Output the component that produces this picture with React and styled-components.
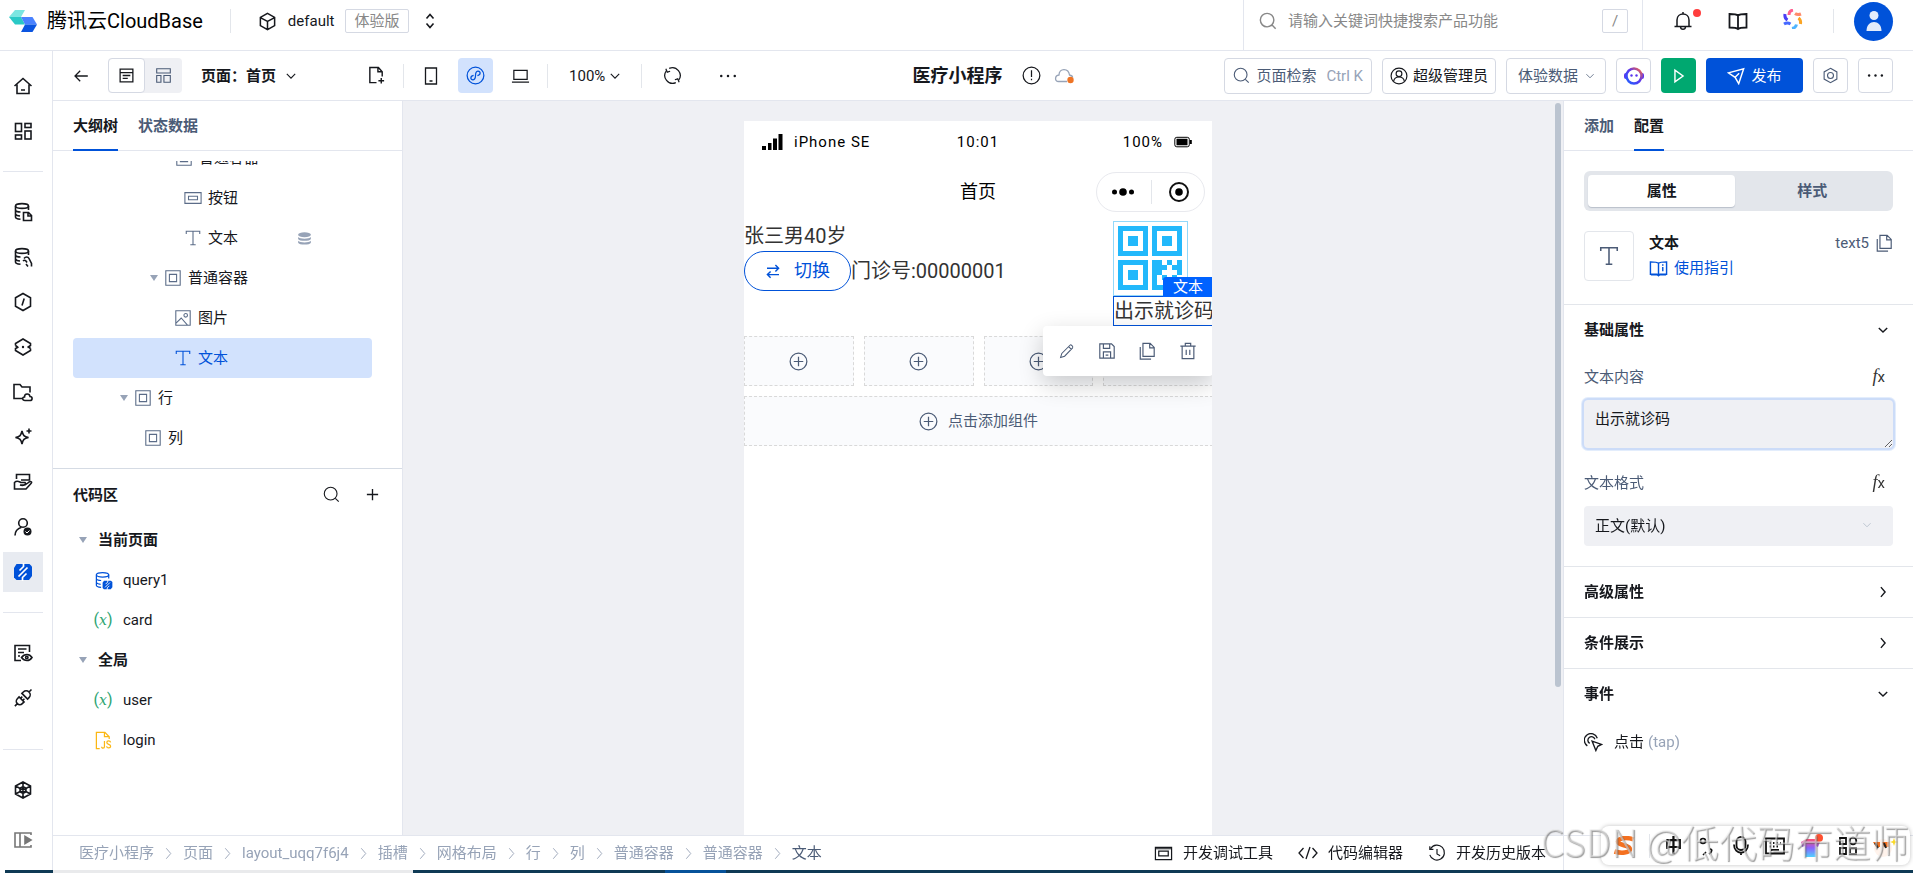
import { useState } from "react";
import styled, { createGlobalStyle, css } from "styled-components";

const GlobalStyle = createGlobalStyle`
  * {
    box-sizing: border-box;
  }
  body {
    margin: 0;
    color: #16181d;
    font-family: Roboto, "Noto Sans CJK SC", sans-serif;
    font-size: 15px;
    line-height: 20px;
  }
  button, input, select, textarea {
    font: inherit;
    color: inherit;
  }
  button {
    padding: 0;
    border: 0;
    background: none;
    cursor: pointer;
  }
  a {
    color: inherit;
    text-decoration: none;
  }
  ul, ol {
    list-style: none;
    margin: 0;
    padding: 0;
  }
`;

/* ---------- icons ---------- */

const Svg = styled.svg`
  display: block;
  flex: none;
  width: ${(p) => p.$size || 20}px;
  height: ${(p) => p.$size || 20}px;
  fill: none;
  stroke: currentColor;
  stroke-width: ${(p) => p.$weight || 1.3};
  color: ${(p) => p.$color || "inherit"};
`;

const DB = (
  <>
    <ellipse cx="9" cy="4" rx="6.5" ry="2.4" />
    <path d="M2.5 4v11c0 1 2 2 5 2.3M15.5 4v4M2.5 8c.3 1 2.5 2 5 2M2.5 12c.3 1 2 1.8 4.5 2" />
  </>
);
const BOLT = (
  <>
    <path d="M3.500 2h13L19 4.500V14l-3 4H3.500L1 15.500V6z" fill="currentColor" stroke="none" />
    <path d="M10.500 1v3.500L6.500 8.500M9.500 19v-3.500l4-4M14.500 5.500l-9 9" stroke="#fff" strokeWidth="1.700" />
  </>
);

const glyphs = {
  home: <path d="M1.5 10 10 2.5 18.5 10M4 8.5v9h12v-9M8 14h4" />,
  apps: (
    <>
      <rect x="2.5" y="2.5" width="6" height="8" />
      <rect x="12" y="2.5" width="6" height="4" />
      <rect x="2.5" y="14" width="6" height="4" />
      <rect x="12" y="10" width="6" height="8" />
    </>
  ),
  dbFile: (
    <>
      {DB}
      <path d="M10.5 10.5h5l3 3v5h-8zM15 10.5v3.5h3.5" />
    </>
  ),
  dbHand: (
    <>
      {DB}
      <path d="M10 14c1-1 2-1 3 0l1 1.5M11 11.5c1.5-2 4-2 5 0l2.500 5v3M13 17l2 2.500" />
    </>
  ),
  hexSlash: <path d="m10 1.500 7.500 4.300v8.400L10 18.500l-7.500-4.300V5.800zM11.200 6.500 9 13.500" />,
  hexDots: (
    <>
      <path d="M2.500 8.500V6.500L10 2l7.500 4.500v2l-3 2M2.500 8.500l2 1.500M17.500 11.500v2L10 18l-7.500-4.500v-2l3-1.500M17.500 11.500l-2-1.500" />
      <circle cx="10" cy="10" r="1.200" fill="currentColor" stroke="none" />
    </>
  ),
  folderCloud: (
    <>
      <path d="M9 16.500H1V2.500h6l2 2.500h8v5.500" />
      <path d="M12 18.500c-3 0-3-3.500-.5-3.500 0-4 5-4 5.500-.5 3 .2 2.500 4 0 4z" />
    </>
  ),
  sparkle: <path d="M9 4c1 4.500 2 5.500 6.500 6.500C11 11.500 10 12.500 9 17c-1-4.500-2-5.500-6.500-6.500C7 9.500 8 8.500 9 4zM16 1.500v5M13.500 4h5" />,
  handCard: (
    <>
      <path d="M3.500 7V2.500h13V8H8" />
      <path d="M1.500 10.500c3-3 5.500 0 6.500 0h4c1.500 2-.5 3-5 2.500 5 1.500 6.500-1 9-3 2-1 3.500 0 2 1.500L13 17H1.500z" />
    </>
  ),
  userCheck: (
    <>
      <circle cx="10" cy="6" r="4.300" />
      <path d="M2 18.500c0-4 2.500-7 6.500-8.300" />
      <circle cx="14.500" cy="14.500" r="4" fill="currentColor" stroke="none" />
      <path d="m12.500 14.500 1.500 1.500 2.500-2.500" stroke="#fff" strokeWidth="1" />
    </>
  ),
  bolt: BOLT,
  docEye: (
    <>
      <path d="M8 17.500H2v-15h14.500V9M5 6h8.500M5 9.500h6M5 13h2" />
      <path d="M8.500 14.500c3-4 8-4 10.500 0-2.500 4-7.500 4-10.500 0z" />
      <circle cx="13.800" cy="14.500" r="1.200" />
    </>
  ),
  plug: (
    <g transform="rotate(-45 10 10)">
      <path d="M-1.500 10H2M8 6.500H5.500a3.500 3.500 0 0 0 0 7H8zM8 8.500h2.500M8 11.500h2.500" />
      <path d="M12.500 6h2a4 4 0 0 1 0 8h-2zM18.500 10H22" />
    </g>
  ),
  hexNet: (
    <>
      <path d="m10 2 7.500 4v8L10 18l-7.500-4V6zM10 2v16M2.500 6l15 8M17.500 6l-15 8" />
      <circle cx="10" cy="10" r="3" />
    </>
  ),
  expand: (
    <>
      <path d="M18 5V3H2v14h16v-2M7 3v14" />
      <path d="M12 6.500v7l6-3.500z" fill="currentColor" />
    </>
  ),
  cube: <path d="m10 1.500 7.500 4.200v8.600L10 18.500l-7.500-4.200V5.700zM2.500 6 10 10l7.500-4M10 10v8.500" />,
  updown: <path d="m6.500 7.500 3.500-4 3.500 4M6.500 12.500l3.500 4 3.500-4" />,
  search: (
    <>
      <circle cx="9" cy="9" r="7.500" />
      <path d="m14.500 14.500 4 4" />
    </>
  ),
  bell: <path d="M1.500 15.500h17M4 15.500V9c0-8 12-8 12 0v6.500M10 1v2M7.500 16c.3 3 4.700 3 5 0" />,
  book: <path d="M10 4.500C8.500 3 5 3 1.500 3v13.500c4 0 7 0 8.500 1.500 1.500-1.500 4.500-1.500 8.500-1.500V3C15 3 11.500 3 10 4.500zM10 4.500V18" />,
  back: <path d="M9 3.500 2.500 10 9 16.500M2.500 10h16" />,
  page: <path d="M2.500 2.500h15v15h-15zM2.500 6.500h15M5.500 10h9M5.500 13.500h6" />,
  blocks: <path d="M2 2h16v5H2zM2 10h5v8H2zM10.500 10H18v8h-7.500z" />,
  chevronDown: <path d="m4 7 6 6 6-6" />,
  chevronRight: <path d="m7 3 6 7-6 7" />,
  filePlus: <path d="M10 17.500H3v-16h9l4 4.500v5M11.500 1.500V6H16M15 12.500v6M12 15.500h6" />,
  phone: <path d="M4.500 2h11v16h-11zM8.500 15h3" />,
  mini: (
    <>
      <circle cx="10" cy="10" r="8.800" />
      <path d="M8 9.800c-4 .7-3.500 5-.5 4.700 2-.3 2.500-2 2.500-4.500s.5-4.200 2.500-4.500c3-.3 3.500 4-.5 4.700" />
    </>
  ),
  laptop: <path d="M3 4.500h14v9.500H3zM1 17h18" />,
  refresh: (
    <>
      <path d="M6.500 2.500a8.300 8.300 0 0 1 10 12.500M13.500 17.500A8.300 8.300 0 0 1 3.500 5" />
      <path d="m3 3 1.500 3.500 3-1M17 17l-1.500-3.500-3 1" />
    </>
  ),
  dots: (
    <g fill="currentColor" stroke="none">
      <circle cx="2.500" cy="10" r="1.400" />
      <circle cx="10" cy="10" r="1.400" />
      <circle cx="17.500" cy="10" r="1.400" />
    </g>
  ),
  alert: (
    <>
      <circle cx="10" cy="10" r="8.800" />
      <path d="M10 4.500v7M10 13.500V15" />
    </>
  ),
  cloud: (
    <>
      <path d="M13 15.500H4.500c-4 0-4-6 .5-6.500C5 2 14.500 1.500 15.500 9c2 .3 3 1 3.200 2.500" />
      <circle cx="16.500" cy="14" r="3.200" fill="#ee7425" stroke="none" />
    </>
  ),
  admin: (
    <>
      <circle cx="10" cy="10" r="8.800" />
      <circle cx="10" cy="7.500" r="3.200" />
      <path d="M4 16c1-6.500 11-6.500 12 0" />
    </>
  ),
  play: <path d="M5.500 3.500v13l9-6.500z" />,
  send: <path d="M1.500 6.500 18.500 2 13 18.500l-4-7zM9 11.500 13.500 7" />,
  hexNut: (
    <>
      <path d="m10 1.500 7.500 4.300v8.400L10 18.500l-7.500-4.300V5.800z" />
      <circle cx="10" cy="10" r="3.500" />
    </>
  ),
  container: (
    <>
      <path d="M2 2h16v16H2z" />
      <path d="M6 6h8v8H6z" />
    </>
  ),
  button: <path d="M1 4h18v12H1zM5 8h10v4H5z" />,
  text: <path d="M2.500 5.500V2.500h15v3M10 2.500v15M7 17.500h6" />,
  image: (
    <>
      <path d="M2 2h16v16H2zM2 16l6-6 7 8" />
      <circle cx="13" cy="7" r="2" />
    </>
  ),
  data: (
    <g fill="currentColor" stroke="none">
      <ellipse cx="10" cy="5" rx="8.500" ry="3.200" />
      <path d="M1.500 8c2 3 15 3 17 0v2.500c-1 3.500-16 3.500-17 0zM1.500 13c2 3 15 3 17 0v2.500c-1 3.500-16 3.500-17 0z" />
    </g>
  ),
  plus: <path d="M10 2.500v15M2.500 10h15" />,
  query: (
    <>
      {DB}
      <g transform="translate(8.500 9) scale(.57)">{BOLT}</g>
    </>
  ),
  js: (
    <>
      <path d="M6 18.500H2.500v-17h9L16 6v2.500M11 1.500V6h5" />
      <path d="M11 10.500v6c0 2-3 2-3 0M17.500 12c-.5-2-4-2-4 0 0 2.500 4 1.500 4 4 0 2.500-4 2.500-4.200 0" />
    </>
  ),
  swap: <path d="M2.500 6.500h14.500M13 2.500l4 4-4 4M17.500 14.500H3M7 10.500l-4 4 4 4" />,
  addCircle: (
    <>
      <circle cx="10" cy="10" r="8.800" />
      <path d="M10 5v10M5 10h10" />
    </>
  ),
  pencil: <path d="M2 18l1.500-5L14 2.500c1-1 4 2 3 3.500L7 16.500zM12 4.500l3.500 3.500" />,
  save: <path d="M2 2h13l3 3v13H2zM6 18v-7h8v7M6 2v5h7V2M8.500 14.500h3" />,
  copy: <path d="M5.500 1.500h8l4.500 4.500v10H5.500zM13 1.500V6.500h5M2.500 5.500v13.500h12" />,
  trash: <path d="M1.500 4.500h17M7 4.500v-3h6v3M3.500 4.500v14h13v-14M8 8.500v6M12 8.500v6" />,
  guide: (
    <>
      <path d="M10 4.500C8.500 3 5 3 1.500 3v13h7L10 17.500 11.500 16h7V3C15 3 11.500 3 10 4.500zM10 4.500V18" />
      <path d="M2 16.500h16M14.500 5.500v1.500M14.500 8.500v4.500" />
    </>
  ),
  tap: <path d="M3.500 13.500A7 7 0 1 1 14 5.500M6 11a3.800 3.800 0 1 1 5.500-4.500M8.500 8.500l10 3.500-4 2-2 4.500z" />,
  tools: <path d="M1.500 3.500h17v13h-17zM5 7.500h10v5H5zM1.500 5h17" />,
  code: <path d="M5.500 5 1 10l4.500 5M14.500 5l4.500 5-4.500 5M12 4 8 16" />,
  history: <path d="M3 5a8.300 8.300 0 1 1-1 7M2 2.500V6h4M10 5.500V11l3.500 2" />,
  mic: (
    <>
      <rect x="5.500" y="1" width="9" height="13" rx="4.500" />
      <path d="M3 8.500c0 11 14 11 14 0M10 16.500V19" />
    </>
  ),
  keyboard: <path d="M1 2.500h18v15H1zM4.500 7h1.500M8 7h1.500M11.500 7H13M15 7h1M4.500 10.500h1.500M8 10.500h1.500M11.500 10.500H13M6 14h8" />,
  punct: (
    <>
      <circle cx="6" cy="5" r="2.500" />
      <path d="M13 13c2.500 0 2.500 3-1 5M9 16l-3 3" />
    </>
  ),
  tools4: (
    <>
      <path d="M2 2h6v6H2zM2 12h6v6H2zM12 12h6v6h-6z" />
      <circle cx="15" cy="5" r="3.300" />
    </>
  ),
};

const Icon = ({ name, size, weight, color }) => (
  <Svg viewBox="0 0 20 20" $size={size} $weight={weight} $color={color} aria-hidden="true">
    {glyphs[name]}
  </Svg>
);

const Logo = () => (
  <svg width="28" height="22" viewBox="0 0 28 22" aria-hidden="true">
    <path d="M6 0h10l-4 7H0z" fill="#7be6e1" />
    <path d="M0 7h12l4 7.500H6z" fill="#2ac9c6" />
    <path d="M12 7h11.500l4.500 7.500H16z" fill="#4a82ff" />
    <path d="M16 14.500h12L23.500 22H12z" fill="#0b55e0" />
  </svg>
);

const Spark = () => (
  <svg width="20" height="20" viewBox="0 0 20 20" fill="none" strokeWidth="3" strokeLinejoin="round" aria-hidden="true">
    <path d="M6 6c0-3 1-4.500 4-5" stroke="#ff5f8f" />
    <path d="M12 4.500c2 1.500 3.500 1.500 6 .5" stroke="#ff8a6b" />
    <path d="M15.500 9c2 1.500 2.500 3 2 6" stroke="#fba524" />
    <path d="M9 19.500c3-.5 4-1.500 4.500-4" stroke="#4fb4ff" />
    <path d="M1 15c2.500-1.500 4-1.500 6.500 0" stroke="#4568ff" />
    <path d="M2 5c-.5 3 0 4.500 2.500 6" stroke="#4a3df5" />
  </svg>
);

const Bot = () => (
  <svg width="20" height="20" viewBox="0 0 20 20" aria-hidden="true">
    <defs>
      <linearGradient id="bot" x1="0" y1="1" x2="1" y2="0">
        <stop offset="0" stopColor="#1f63ff" />
        <stop offset=".55" stopColor="#5b35ee" />
        <stop offset="1" stopColor="#ff6a3d" />
      </linearGradient>
    </defs>
    <rect x="0" y="7" width="20" height="6" rx="2" fill="#5a35f0" />
    <circle cx="10" cy="10" r="7.500" fill="#fff" stroke="url(#bot)" strokeWidth="2.500" />
    <circle cx="7.500" cy="9.500" r="1.200" fill="#5a35f0" />
    <circle cx="12.500" cy="9.500" r="1.200" fill="#5a35f0" />
  </svg>
);

const QrCode = () => (
  <svg width="75" height="75" viewBox="0 0 75 75" aria-hidden="true">
    <rect x=".5" y=".5" width="74" height="74" fill="#fff" stroke="#93d8fa" />
    {[
      [5, 5],
      [39, 5],
      [5, 39],
    ].map(([x, y]) => (
      <g key={`${x}-${y}`} fill="#22b8fb">
        <path fillRule="evenodd" d={`M${x} ${y}h30v30h-30zM${x + 5} ${y + 5}v20h20v-20z`} />
        <rect x={x + 10} y={y + 10} width="10" height="10" />
      </g>
    ))}
    <path
      fill="#22b8fb"
      d="M39 39h10v5h5v-5h5v5h-5v5h-5v5h5v5h-5v-5h-5v10h10v5H39zM64 39h5v15h-5v-5h-5v-5h5zM59 54h5v5h5v10h-5v-5h-5z"
    />
  </svg>
);

/* ---------- shell ---------- */

const Page = styled.div`
  display: flex;
  flex-direction: column;
  height: 100vh;
  background: #fff;
`;
const Body = styled.div`
  display: flex;
  flex: 1;
  min-height: 0;
`;
const Main = styled.main`
  display: flex;
  flex-direction: column;
  flex: 1;
  min-width: 0;
`;
const Middle = styled.div`
  display: flex;
  flex: 1;
  min-height: 0;
`;
const VLine = styled.span`
  flex: none;
  width: 1px;
  height: 24px;
  margin: 0 ${(p) => p.$gap || 0}px;
  background: #e3e6eb;
`;

/* ---------- header ---------- */

const Header = styled.header`
  display: flex;
  align-items: center;
  flex: none;
  height: 51px;
  padding: 0 20px 8px 9px;
  border-bottom: 1px solid #e3e6ee;
`;
const Brand = styled.a`
  display: flex;
  align-items: center;
  gap: 10px;
  color: #000;
  font-size: 20px;
  line-height: 24px;
`;
const Env = styled.button`
  display: flex;
  align-items: center;
  gap: 11px;
`;
const Badge = styled.span`
  padding: 1px 8px;
  border: 1px solid #d5d9e3;
  border-radius: 2px;
  color: #888;
`;
const SearchArea = styled.label`
  display: flex;
  align-items: center;
  gap: 9px;
  align-self: stretch;
  width: 400px;
  margin: 0 30px -8px auto;
  padding: 0 14px 8px 15px;
  border: solid #e3e6ee;
  border-width: 0 1px;
  color: #888;
`;
const SearchInput = styled.input`
  flex: 1;
  min-width: 0;
  border: 0;
  outline: 0;
  background: none;
  &::placeholder {
    color: #888;
    opacity: 1;
  }
`;
const Key = styled.kbd`
  width: 26px;
  border: 1px solid #d5d9e3;
  border-radius: 2px;
  font-family: inherit;
  line-height: 22px;
  text-align: center;
`;
const HeaderActions = styled.div`
  display: flex;
  align-items: center;
  gap: 35px;
`;
const Account = styled.div`
  display: flex;
  align-items: center;
  gap: 20px;
  margin-left: -5px;
`;
const Bell = styled.button`
  position: relative;
  &::after {
    content: "";
    position: absolute;
    top: -2px;
    right: -8px;
    width: 8px;
    height: 8px;
    border-radius: 50%;
    background: #ff3e3e;
  }
`;
const Avatar = styled.button`
  display: grid;
  place-items: center;
  width: 39px;
  height: 39px;
  border-radius: 50%;
  background: #0052d9;
`;

const TopBar = () => (
  <Header>
    <Brand href="#">
      <Logo />
      腾讯云CloudBase
    </Brand>
    <VLine $gap={27} />
    <Env>
      <Icon name="cube" size={19} weight={1.6} />
      default
      <Badge>体验版</Badge>
      <Icon name="updown" weight={1.6} />
    </Env>
    <SearchArea>
      <Icon name="search" size={18} weight={1.6} />
      <SearchInput placeholder="请输入关键词快捷搜索产品功能" />
      <Key>/</Key>
    </SearchArea>
    <HeaderActions>
      <Bell aria-label="通知">
        <Icon name="bell" weight={1.5} />
      </Bell>
      <button aria-label="文档">
        <Icon name="book" weight={1.8} />
      </button>
      <button aria-label="助手">
        <Spark />
      </button>
      <Account>
        <VLine />
        <Avatar aria-label="账号">
          <svg width="20" height="20" viewBox="0 0 20 20" fill="#e3ecfb">
            <circle cx="10" cy="4.500" r="4.500" />
            <path d="M2.500 20c0-12 15-12 15 0z" />
          </svg>
        </Avatar>
      </Account>
    </HeaderActions>
  </Header>
);

/* ---------- left rail ---------- */

const RailBox = styled.nav`
  display: flex;
  flex-direction: column;
  flex: none;
  width: 53px;
  padding: 15px 9px 10px 3px;
  border-right: 1px solid #e3e6ee;
`;
const RailGroup = styled.div`
  display: flex;
  flex-direction: column;
  gap: ${(p) => (p.$bottom ? 10 : 5)}px;
  ${(p) =>
    !p.$first &&
    css`
      margin-top: ${p.$bottom ? "auto" : "20px"};
      padding-top: 20px;
      border-top: 1px solid #e3e6ee;
    `}
`;
const RailButton = styled.button`
  display: grid;
  place-items: center;
  width: 40px;
  height: 40px;
  color: ${(p) => (p.$active ? "#0052d9" : p.$dim ? "#777" : "#16181d")};
  background: ${(p) => (p.$active ? "#e8ebf1" : "none")};
`;

const railGroups = [
  ["home", "apps"],
  ["dbFile", "dbHand", "hexSlash", "hexDots", "folderCloud", "sparkle", "handCard", "userCheck", "bolt"],
  ["docEye", "plug"],
  ["hexNet", "expand"],
];

const Rail = () => (
  <RailBox>
    {railGroups.map((group, i) => (
      <RailGroup key={i} $first={i === 0} $bottom={i === 3}>
        {group.map((name) => (
          <RailButton key={name} aria-label={name} $active={name === "bolt"} $dim={name === "expand"}>
            <Icon name={name} weight={1.6} />
          </RailButton>
        ))}
      </RailGroup>
    ))}
  </RailBox>
);

/* ---------- toolbar ---------- */

const Bar = styled.div`
  display: grid;
  grid-template-columns: 1fr auto 1fr;
  align-items: center;
  flex: none;
  height: 50px;
  padding: 0 20px;
  border-bottom: 1px solid #e3e6ee;
`;
const BarSide = styled.div`
  display: flex;
  align-items: center;
  justify-content: ${(p) => (p.$end ? "flex-end" : "flex-start")};
  gap: ${(p) => p.$gap || 0}px;
`;
const BarTitle = styled.div`
  display: flex;
  align-items: center;
  gap: 13px;
  padding-left: 20px;
`;
const AppName = styled.h1`
  margin: 0 6px 0 0;
  font-size: 18px;
  line-height: 24px;
`;
const Toggle = styled.div`
  display: flex;
  margin: 0 19px;
  border-radius: 4px;
  background: #eff0f4;
`;
const IconButton = styled.button`
  display: grid;
  place-items: center;
  width: 35px;
  height: 35px;
  border-radius: 4px;
  color: ${(p) => p.$color || "inherit"};
  background: ${(p) => p.$bg || "none"};
  border: ${(p) => (p.$outlined ? "1px solid #d5d9e3" : 0)};
`;
const ToggleButton = styled(IconButton)`
  width: 37px;
`;
const DropButton = styled.button`
  display: flex;
  align-items: center;
  gap: 8px;
  margin-right: ${(p) => p.$after || 0}px;
  font-weight: 700;
`;
const ZoomButton = styled(DropButton)`
  gap: 3px;
  margin: 0 6px 0 12px;
  font-weight: 400;
`;
const BoxButton = styled.button`
  display: flex;
  align-items: center;
  gap: 5px;
  height: 36px;
  padding: 0 7px;
  border: 1px solid #d5d9e3;
  border-radius: 4px;
  color: ${(p) => p.$color || "inherit"};
  white-space: nowrap;
`;
const FindButton = styled(BoxButton)`
  gap: 6px;
  padding: 0 8px;
`;
const DataButton = styled(BoxButton)`
  gap: 6px;
  padding: 0 9px 0 11px;
`;
const Hint = styled.span`
  margin-left: 4px;
  color: #97a3b7;
`;
const Publish = styled(IconButton)`
  display: flex;
  align-items: center;
  justify-content: center;
  gap: 6px;
  width: 97px;
  color: #fff;
  background: #0052d9;
`;

const Toolbar = () => (
  <Bar>
    <BarSide>
      <button aria-label="返回">
        <Icon name="back" size={16} weight={1.6} />
      </button>
      <Toggle>
        <ToggleButton $outlined $bg="#fff" aria-label="页面">
          <Icon name="page" size={17} weight={1.5} />
        </ToggleButton>
        <ToggleButton $color="#4b5b76" aria-label="布局">
          <Icon name="blocks" size={17} weight={1.3} />
        </ToggleButton>
      </Toggle>
      <DropButton $after={61}>
        页面：首页
        <Icon name="chevronDown" size={14} weight={1.6} />
      </DropButton>
      <IconButton aria-label="新建页面">
        <Icon name="filePlus" size={19} weight={1.5} />
      </IconButton>
      <VLine $gap={9} />
      <BarSide $gap={10}>
        <IconButton aria-label="手机">
          <Icon name="phone" size={20} />
        </IconButton>
        <IconButton $bg="#d2e2fd" $color="#0052d9" aria-label="小程序">
          <Icon name="mini" size={19} />
        </IconButton>
        <IconButton aria-label="电脑">
          <Icon name="laptop" size={19} />
        </IconButton>
      </BarSide>
      <VLine $gap={9} />
      <ZoomButton>
        100%
        <Icon name="chevronDown" size={14} weight={1.6} />
      </ZoomButton>
      <VLine $gap={13} />
      <BarSide $gap={20}>
        <IconButton aria-label="刷新">
          <Icon name="refresh" size={19} />
        </IconButton>
        <IconButton aria-label="更多">
          <Icon name="dots" size={18} />
        </IconButton>
      </BarSide>
    </BarSide>
    <BarTitle>
      <AppName>医疗小程序</AppName>
      <Icon name="alert" size={19} />
      <Icon name="cloud" size={20} color="#97a3b7" />
    </BarTitle>
    <BarSide $end $gap={10}>
      <FindButton $color="#4b5b76">
        <Icon name="search" size={17} />
        页面检索 <Hint>Ctrl K</Hint>
      </FindButton>
      <BoxButton>
        <Icon name="admin" size={18} />
        超级管理员
      </BoxButton>
      <DataButton $color="#4b5b76">
        体验数据
        <Icon name="chevronDown" size={12} />
      </DataButton>
      <IconButton $outlined aria-label="智能助手">
        <Bot />
      </IconButton>
      <IconButton $bg="#00a870" $color="#fff" aria-label="预览">
        <Icon name="play" size={18} weight={1.6} />
      </IconButton>
      <Publish>
        <Icon name="send" size={18} weight={1.6} />
        发布
      </Publish>
      <IconButton $outlined $color="#4b5b76" aria-label="设置">
        <Icon name="hexNut" size={17} />
      </IconButton>
      <IconButton $outlined aria-label="更多">
        <Icon name="dots" size={17} />
      </IconButton>
    </BarSide>
  </Bar>
);

/* ---------- outline panel ---------- */

const SidePanel = styled.aside`
  display: flex;
  flex-direction: column;
  flex: none;
  width: 350px;
  border: solid #e3e6ee;
`;
const Outline = styled(SidePanel)`
  border-width: 0 1px 0 0;
`;
const Tabs = styled.div`
  display: flex;
  flex: none;
  gap: 20px;
  height: 50px;
  padding: 0 20px;
  border-bottom: 1px solid #e3e6ee;
`;
const Tab = styled.button`
  position: relative;
  font-weight: 700;
  color: ${(p) => (p.$active ? "#16181d" : "#4b5b76")};
  ${(p) =>
    p.$active &&
    css`
      &::after {
        content: "";
        position: absolute;
        left: 0;
        right: 0;
        bottom: -1px;
        height: 2px;
        background: #0052d9;
      }
    `}
`;
const TreeWindow = styled.ul`
  display: flex;
  flex-direction: column;
  justify-content: flex-end;
  height: 307px;
  margin: 10px 30px 0 20px;
  padding-bottom: 10px;
  overflow: hidden;
`;
const Row = styled.li`
  display: flex;
  align-items: center;
  flex: none;
  gap: ${(p) => p.$gap || 6}px;
  height: 40px;
  padding-left: ${(p) => p.$indent}px;
  padding-right: 60px;
  border-radius: 4px;
  font-weight: ${(p) => (p.$bold ? 700 : 400)};
  color: ${(p) => (p.$selected ? "#0052d9" : "#16181d")};
  background: ${(p) => (p.$selected ? "#d2e2fd" : "none")};
`;
const Caret = styled.span`
  flex: none;
  border: 4px solid transparent;
  border-top: 6px solid #97a3b7;
  border-bottom: 0;
`;
const RowData = styled.span`
  margin-left: auto;
`;
const SectionHead = styled.div`
  display: flex;
  align-items: center;
  gap: 25px;
  height: 52px;
  padding: 0 22px 0 20px;
  border-top: 1px solid #d5dbe4;
`;
const SectionTitle = styled.h2`
  flex: 1;
  margin: 0;
  font-size: 15px;
  line-height: 20px;
`;
const VarMark = styled.span`
  width: 20px;
  margin-left: -1px;
  color: #2ba471;
  font-size: 16px;
  white-space: nowrap;
  text-align: center;
  i {
    font-family: "DejaVu Serif", serif;
    font-size: 14px;
  }
`;

const tree = [
  { icon: "container", label: "普通容器", indent: 102 },
  { icon: "button", label: "按钮", indent: 111 },
  { icon: "text", label: "文本", indent: 111, data: true },
  { icon: "container", label: "普通容器", indent: 77, open: true },
  { icon: "image", label: "图片", indent: 101 },
  { icon: "text", label: "文本", indent: 101, selected: true },
  { icon: "container", label: "行", indent: 47, open: true },
  { icon: "container", label: "列", indent: 71 },
];

const OutlinePanel = () => (
  <Outline>
    <Tabs>
      <Tab $active>大纲树</Tab>
      <Tab>状态数据</Tab>
    </Tabs>
    <TreeWindow>
      {tree.map((n, i) => (
        <Row key={i} $indent={n.indent} $selected={n.selected}>
          {n.open && <Caret />}
          <Icon name={n.icon} size={18} weight={1.2} color={n.selected ? "#0052d9" : "#5b6c88"} />
          {n.label}
          {n.data && (
            <RowData>
              <Icon name="data" size={15} color="#97a3b7" />
            </RowData>
          )}
        </Row>
      ))}
    </TreeWindow>
    <SectionHead>
      <SectionTitle>代码区</SectionTitle>
      <button aria-label="搜索">
        <Icon name="search" size={17} />
      </button>
      <button aria-label="新增">
        <Icon name="plus" size={15} weight={1.8} />
      </button>
    </SectionHead>
    <ul>
      <Row $indent={26} $gap={11} $bold>
        <Caret />
        当前页面
      </Row>
      <Row $indent={41} $gap={10}>
        <Icon name="query" size={19} color="#0052d9" />
        query1
      </Row>
      <Row $indent={41} $gap={10}>
        <VarMark>
          (<i>x</i>)
        </VarMark>
        card
      </Row>
      <Row $indent={26} $gap={11} $bold>
        <Caret />
        全局
      </Row>
      <Row $indent={41} $gap={10}>
        <VarMark>
          (<i>x</i>)
        </VarMark>
        user
      </Row>
      <Row $indent={41} $gap={10}>
        <Icon name="js" size={19} color="#fbb714" />
        login
      </Row>
    </ul>
  </Outline>
);

/* ---------- canvas ---------- */

const Canvas = styled.section`
  display: flex;
  justify-content: center;
  flex: 1;
  min-width: 0;
  background: #eff0f4;
`;
const Stage = styled.div`
  display: flex;
  justify-content: center;
  flex: 1;
  padding-top: 20px;
`;
const ScrollTrack = styled.div`
  flex: none;
  width: 10px;
  padding: 2px;
`;
const ScrollThumb = styled.div`
  width: 6px;
  height: 80%;
  border-radius: 3px;
  background: #bbc4d0;
`;
const Phone = styled.div`
  width: 468px;
  overflow: hidden;
  background: #fff;
`;
const PhoneBar = styled.div`
  display: grid;
  grid-template-columns: 1fr auto 1fr;
  align-items: center;
  color: #000;
`;
const StatusBar = styled(PhoneBar)`
  height: 42px;
  letter-spacing: 1px;
`;
const NavBar = styled(PhoneBar)`
  height: 58px;
  font-size: 18px;
`;
const StatusSide = styled.span`
  display: flex;
  align-items: center;
  gap: 11px;
  padding: 0 20px 0 18px;
  justify-content: ${(p) => (p.$end ? "flex-end" : "flex-start")};
`;
const Capsule = styled.div`
  display: flex;
  align-items: center;
  justify-content: center;
  gap: 17px;
  justify-self: end;
  width: 109px;
  height: 40px;
  margin-right: 7px;
  border: 1px solid #e8e9ee;
  border-radius: 20px;
`;
const Content = styled.div`
  width: calc(100% + 1px);
  color: #333;
`;
const Patient = styled.div`
  display: flex;
  margin-bottom: 10px;
  font-size: 20px;
  line-height: 30px;
`;
const PatientInfo = styled.div`
  flex: 1;
`;
const Line = styled.div`
  display: flex;
  align-items: center;
  min-height: 30px;
`;
const SwitchButton = styled.button`
  display: flex;
  align-items: center;
  justify-content: center;
  gap: 13px;
  width: 107px;
  height: 40px;
  border: 1px solid #0052d9;
  border-radius: 20px;
  color: #0052d9;
  font-size: 18px;
`;
const Code = styled.div`
  flex: none;
  width: 100px;
  white-space: nowrap;
  svg {
    display: block;
  }
`;
const Selected = styled.div`
  position: relative;
  height: 30px;
  border: 1px solid #0052d9;
  line-height: 28px;
`;
const Tag = styled.span`
  position: absolute;
  right: -1px;
  bottom: 100%;
  width: 50px;
  border-radius: 3px 0 0 0;
  background: #0062ff;
  color: #fff;
  font-size: 15px;
  line-height: 20px;
  text-align: center;
`;
const FloatBar = styled.div`
  position: absolute;
  top: calc(100% + 1px);
  right: -1px;
  display: flex;
  justify-content: space-around;
  align-items: center;
  width: 170px;
  height: 50px;
  padding: 0 5px;
  border-radius: 4px;
  background: #fff;
  box-shadow: 0 8px 24px rgba(0, 0, 0, 0.2);
  color: #4b5b76;
`;
const Slots = styled.div`
  display: grid;
  grid-template-columns: repeat(4, 1fr);
  gap: 10px;
`;
const Slot = styled.button`
  display: flex;
  align-items: center;
  justify-content: center;
  gap: 10px;
  height: 50px;
  border: 1px dashed #d9d9d9;
  background: #fafbfd;
  color: #4b5b76;
  grid-column: ${(p) => (p.$wide ? "1 / -1" : "auto")};
`;

const CanvasArea = () => (
  <Canvas>
    <Stage>
      <Phone>
        <StatusBar>
          <StatusSide>
            <svg width="21" height="16" viewBox="0 0 21 16">
              <path d="M0 12h4v4H0zM6 9h3.500v7H6zM11 4.500h4V16h-4zM16.500 0h4v16h-4z" />
            </svg>
            iPhone SE
          </StatusSide>
          10:01
          <StatusSide $end>
            100%
            <svg width="18" height="12" viewBox="0 0 18 12">
              <rect x=".8" y="1.300" width="14.500" height="9.500" rx="2" fill="none" stroke="#000" />
              <path d="M2.500 2.800h11v6.500h-11zM16 4h1.800v4H16z" />
            </svg>
          </StatusSide>
        </StatusBar>
        <NavBar>
          <span />
          首页
          <Capsule>
            <svg width="22" height="8" viewBox="0 0 22 8">
              <circle cx="2.500" cy="4" r="2.500" />
              <circle cx="11" cy="4" r="3.800" />
              <circle cx="19.500" cy="4" r="2.500" />
            </svg>
            <VLine />
            <svg width="20" height="20" viewBox="0 0 20 20">
              <circle cx="10" cy="10" r="9" fill="none" stroke="#111" strokeWidth="2" />
              <circle cx="10" cy="10" r="3.800" />
            </svg>
          </Capsule>
        </NavBar>
        <Content>
          <Patient>
            <PatientInfo>
              <Line>张三男40岁</Line>
              <Line>
                <SwitchButton>
                  <Icon name="swap" size={16} weight={1.8} />
                  切换
                </SwitchButton>
                门诊号:00000001
              </Line>
            </PatientInfo>
            <Code>
              <QrCode />
              <Selected>
                出示就诊码
                <Tag>文本</Tag>
                <FloatBar>
                  {["pencil", "save", "copy", "trash"].map((name) => (
                    <button key={name} aria-label={name}>
                      <Icon name={name} size={name === "pencil" ? 16 : 18} weight={1.3} />
                    </button>
                  ))}
                </FloatBar>
              </Selected>
            </Code>
          </Patient>
          <Slots>
            {[0, 1, 2, 3].map((i) => (
              <Slot key={i} aria-label="添加组件">
                <Icon name="addCircle" size={19} />
              </Slot>
            ))}
            <Slot $wide>
              <Icon name="addCircle" size={19} />
              点击添加组件
            </Slot>
          </Slots>
        </Content>
      </Phone>
    </Stage>
    <ScrollTrack>
      <ScrollThumb />
    </ScrollTrack>
  </Canvas>
);

/* ---------- property panel ---------- */

const Inspector = styled(SidePanel)`
  border-width: 0 0 0 1px;
`;
const Segment = styled.div`
  display: grid;
  grid-template-columns: 49fr 51fr;
  height: 40px;
  margin: 20px 20px 0;
  padding: 4px;
  border-radius: 6px;
  background: #e3e6eb;
`;
const SegmentButton = styled.button`
  border-radius: 4px;
  font-weight: 700;
  color: ${(p) => (p.$active ? "#16181d" : "#4b5b76")};
  background: ${(p) => (p.$active ? "#fff" : "none")};
  box-shadow: ${(p) => (p.$active ? "0 1px 1px #b8bfca" : "none")};
`;
const Summary = styled.div`
  display: flex;
  gap: 15px;
  padding: 20px 20px 23px;
`;
const TypeBox = styled.span`
  display: grid;
  place-items: center;
  width: 50px;
  height: 50px;
  border: 1px solid #e3e6eb;
  border-radius: 4px;
  color: #4b5b76;
`;
const SummaryText = styled.div`
  display: flex;
  flex-direction: column;
  flex: 1;
  gap: 5px;
  padding-top: 2px;
`;
const Guide = styled.a`
  display: flex;
  align-items: center;
  gap: 6px;
  color: #0052d9;
`;
const IdButton = styled.button`
  display: flex;
  align-items: center;
  align-self: flex-start;
  gap: 6px;
  padding-top: 2px;
  color: #4b5b76;
`;
const Section = styled.section`
  padding: 0 20px ${(p) => p.$pad || 0}px;
  border-top: 1px solid #e3e6eb;
`;
const SectionToggle = styled.button`
  display: flex;
  align-items: center;
  justify-content: space-between;
  width: 100%;
  height: 50px;
  padding-right: 3px;
  font-weight: 700;
`;
const FieldHead = styled.div`
  display: flex;
  align-items: center;
  justify-content: space-between;
  padding: ${(p) => p.$top}px 8px 13px 0;
  color: #4b5b76;
`;
const Fx = styled.button`
  height: 20px;
  color: #333;
  i {
    font-family: "Liberation Serif", serif;
    font-size: 18px;
    line-height: 18px;
  }
`;
const TextArea = styled.textarea`
  display: block;
  width: 100%;
  height: 48px;
  padding: 9px 11px;
  border: 0;
  outline: 2px solid #ccdcf8;
  border-radius: 4px;
  background: #eff0f4;
  box-shadow: 0 0 0 3px #e3edfc;
  caret-color: #0052d9;
  resize: vertical;
`;
const SelectBox = styled.div`
  position: relative;
  svg {
    position: absolute;
    top: 13px;
    right: 20px;
    pointer-events: none;
  }
`;
const Select = styled.select`
  width: 100%;
  height: 40px;
  padding: 0 11px;
  border: 0;
  border-radius: 4px;
  background: #eff0f4;
  appearance: none;
`;
const EventRow = styled.button`
  display: flex;
  align-items: center;
  gap: 11px;
  height: 46px;
`;
const Muted = styled.span`
  margin-left: -7px;
  color: #97a3b7;
`;

const PropertyPanel = () => {
  const [text, setText] = useState("出示就诊码");

  return (
    <Inspector>
      <Tabs>
        <Tab>添加</Tab>
        <Tab $active>配置</Tab>
      </Tabs>
      <Segment>
        <SegmentButton $active>属性</SegmentButton>
        <SegmentButton>样式</SegmentButton>
      </Segment>
      <Summary>
        <TypeBox>
          <Icon name="text" size={22} weight={1.4} />
        </TypeBox>
        <SummaryText>
          <b>文本</b>
          <Guide href="#">
            <Icon name="guide" size={19} weight={1.5} />
            使用指引
          </Guide>
        </SummaryText>
        <IdButton>
          text5
          <Icon name="copy" size={18} />
        </IdButton>
      </Summary>
      <Section $pad={20}>
        <SectionToggle>
          基础属性
          <Icon name="chevronDown" size={14} weight={2} />
        </SectionToggle>
        <FieldHead $top={12}>
          <label htmlFor="content">文本内容</label>
          <Fx>
            <i>f</i>x
          </Fx>
        </FieldHead>
        <TextArea
          id="content"
          autoFocus
          value={text}
          onChange={(e) => setText(e.target.value)}
          onFocus={(e) => e.target.setSelectionRange(text.length, text.length)}
        />
        <FieldHead $top={25}>
          <label htmlFor="format">文本格式</label>
          <Fx>
            <i>f</i>x
          </Fx>
        </FieldHead>
        <SelectBox>
          <Select id="format">
            <option>正文(默认)</option>
          </Select>
          <Icon name="chevronDown" size={12} color="#bbc4d0" weight={1.6} />
        </SelectBox>
      </Section>
      <Section>
        <SectionToggle>
          高级属性
          <Icon name="chevronRight" size={14} weight={2} />
        </SectionToggle>
      </Section>
      <Section>
        <SectionToggle>
          条件展示
          <Icon name="chevronRight" size={14} weight={2} />
        </SectionToggle>
      </Section>
      <Section>
        <SectionToggle>
          事件
          <Icon name="chevronDown" size={14} weight={2} />
        </SectionToggle>
        <EventRow>
          <Icon name="tap" size={19} weight={1.4} />
          点击
          <Muted>(tap)</Muted>
        </EventRow>
      </Section>
    </Inspector>
  );
};

/* ---------- footer ---------- */

const FooterBar = styled.footer`
  display: flex;
  align-items: center;
  justify-content: space-between;
  flex: none;
  height: 35px;
  padding-left: 26px;
  border-top: 1px solid #e3e6ee;
`;
const Crumbs = styled.ol`
  display: flex;
  align-items: center;
  color: #97a3b7;
`;
const Crumb = styled.li`
  display: flex;
  align-items: center;
  gap: 7px;
  margin-right: 7px;
  &:last-child {
    color: #4b5b76;
  }
`;
const Tools = styled.div`
  display: flex;
  align-items: center;
  gap: 25px;
  align-self: stretch;
  width: 410px;
  margin-right: 349px;
  border-right: 1px solid #e3e6ee;
`;
const ToolButton = styled.button`
  display: flex;
  align-items: center;
  gap: 10px;
  white-space: nowrap;
`;
const Desktop = styled.div`
  display: grid;
  grid-template-columns: 48px 360px 252px 61px 1fr;
  flex: none;
  height: 3px;
  padding-left: 5px;
`;
const Strip = styled.span`
  background: ${(p) => p.$color};
`;

const crumbs = ["医疗小程序", "页面", "layout_uqq7f6j4", "插槽", "网格布局", "行", "列", "普通容器", "普通容器", "文本"];

const Footer = () => (
  <FooterBar>
    <Crumbs>
      {crumbs.map((c, i) => (
        <Crumb key={i}>
          <a href="#">{c}</a>
          {i < crumbs.length - 1 && <Icon name="chevronRight" size={15} weight={1.2} />}
        </Crumb>
      ))}
    </Crumbs>
    <Tools>
      <ToolButton>
        <Icon name="tools" size={19} />
        开发调试工具
      </ToolButton>
      <ToolButton>
        <Icon name="code" size={20} />
        代码编辑器
      </ToolButton>
      <ToolButton>
        <Icon name="history" size={18} />
        开发历史版本
      </ToolButton>
    </Tools>
  </FooterBar>
);

/* ---------- input method bar and watermark, over the page ---------- */

const ImeBar = styled.div`
  position: fixed;
  right: 3px;
  bottom: 8px;
  display: flex;
  align-items: center;
  justify-content: space-between;
  width: 309px;
  height: 39px;
  padding: 0 12px;
  border-radius: 8px;
  background: #fff;
  box-shadow: 0 0 4px rgba(0, 0, 0, 0.25);
  color: #111;
`;
const ImeMode = styled.span`
  font-size: 18px;
  font-weight: 700;
`;
const Watermark = styled.div`
  position: fixed;
  right: 4px;
  bottom: 8px;
  color: rgba(240, 240, 240, 0.5);
  font-family: "Noto Sans CJK SC", sans-serif;
  font-size: 38px;
  font-weight: 300;
  line-height: 48px;
  text-shadow: 1px 1px 1px rgba(90, 90, 90, 0.6);
  white-space: nowrap;
  pointer-events: none;
`;

const Ime = () => (
  <ImeBar>
    <svg width="22" height="20" viewBox="0 0 22 20">
      <path
        d="M20.500 3.500C14 1 5.500 2 5 5.500 4.500 9.500 17 9 17 13c0 4-9 4.500-15.500 2.500"
        fill="none"
        stroke="#f4701f"
        strokeWidth="4.500"
      />
    </svg>
    <VLine />
    <ImeMode>中</ImeMode>
    <Icon name="punct" weight={1.6} />
    <Icon name="mic" weight={1.8} />
    <Icon name="keyboard" weight={1.8} />
    <svg width="24" height="24" viewBox="0 0 24 24">
      <defs>
        <linearGradient id="shirt" x1="0" y1="0" x2="0" y2="1">
          <stop offset="0" stopColor="#ff4e72" />
          <stop offset=".5" stopColor="#8a62ff" />
          <stop offset="1" stopColor="#4fd3ff" />
        </linearGradient>
      </defs>
      <path d="M1 8l5-3h10l4 3-2 5-2-1v11H5V12l-3 1z" fill="url(#shirt)" />
      <circle cx="19" cy="4" r="4" fill="#ff5030" />
    </svg>
    <Icon name="tools4" weight={1.8} />
    <svg width="26" height="24" viewBox="0 0 26 24">
      <circle cx="11" cy="14" r="9" fill="#fff3ec" />
      <path d="M1 8h7v5H4zM10 8h7v5h-5z" fill="#f4701f" />
      <path d="M3 9l3 5M12 9l2 5" stroke="#222" strokeWidth="2" />
      <path d="m22 4 1 3 3 1-3 1-1 3-1-3-3-1 3-1z" fill="#fbd824" />
    </svg>
  </ImeBar>
);

const App = () => (
  <Page>
    <GlobalStyle />
    <TopBar />
    <Body>
      <Rail />
      <Main>
        <Toolbar />
        <Middle>
          <OutlinePanel />
          <CanvasArea />
          <PropertyPanel />
        </Middle>
        <Footer />
      </Main>
    </Body>
    <Desktop>
      <Strip $color="#0f3a55" />
      <Strip $color="#e9eaec" />
      <Strip $color="#0f3a55" />
      <Strip $color="#06529a" />
      <Strip $color="#0f3a55" />
    </Desktop>
    <Ime />
    <Watermark>CSDN @低代码布道师</Watermark>
  </Page>
);

export default App;
